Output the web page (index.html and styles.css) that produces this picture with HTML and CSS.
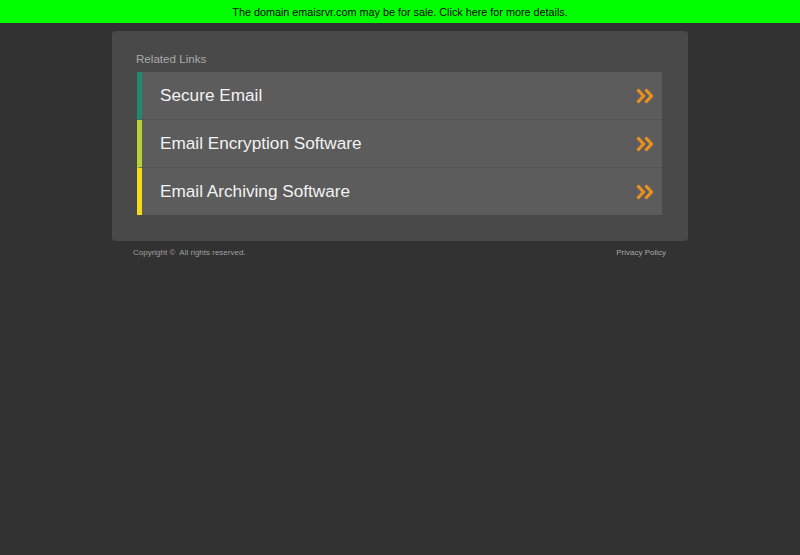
FILE: index.html
```html
<!DOCTYPE html>
<html>
<head>
<meta charset="utf-8">
<link rel="stylesheet" href="styles.css">
</head>
<body>
<div class="topbar"><a href="#">The domain emaisrvr.com may be for sale. Click here for more details.</a></div>
<div class="wrap">
  <div class="panel">
    <h2 class="heading">Related Links</h2>
    <ul class="links">
      <li class="link c1"><span class="label">Secure Email</span><svg class="arrow" width="18" height="16" viewBox="0 0 18 16"><polyline points="1.5,1.5 7.5,8 1.5,14.5"/><polyline points="9.5,1.5 15.5,8 9.5,14.5"/></svg></li>
      <li class="link c2"><span class="label">Email Encryption Software</span><svg class="arrow" width="18" height="16" viewBox="0 0 18 16"><polyline points="1.5,1.5 7.5,8 1.5,14.5"/><polyline points="9.5,1.5 15.5,8 9.5,14.5"/></svg></li>
      <li class="link c3"><span class="label">Email Archiving Software</span><svg class="arrow" width="18" height="16" viewBox="0 0 18 16"><polyline points="1.5,1.5 7.5,8 1.5,14.5"/><polyline points="9.5,1.5 15.5,8 9.5,14.5"/></svg></li>
    </ul>
  </div>
  <div class="footer">
    <span class="copy">Copyright &copy;&nbsp; All rights reserved.</span>
    <a class="privacy" href="#">Privacy Policy</a>
  </div>
</div>
</body>
</html>
```
FILE: styles.css
```css
html, body {
  margin: 0;
  padding: 0;
  background: #323232;
  font-family: "Liberation Sans", Arial, sans-serif;
}
.topbar {
  height: 23px;
  line-height: 24px;
  background: #00ff00;
  text-align: center;
  font-size: 10.8px;
}
.topbar a {
  color: #000;
  text-decoration: none;
}
.wrap {
  width: 576px;
  margin: 8px auto 0;
}
.panel {
  background: #494949;
  border-radius: 4px;
  padding: 20px 26px 26px 25px;
}
.heading {
  margin: 0 0 5px -1px;
  font-weight: normal;
  font-size: 11.6px;
  line-height: 16px;
  color: #a9a9a9;
}
.links {
  list-style: none;
  margin: 0;
  padding: 0;
}
.link {
  display: flex;
  align-items: center;
  justify-content: space-between;
  height: 47px;
  background: #5c5c5c;
  border-left: 5px solid;
  border-bottom: 1px solid #525252;
  padding: 0 8px 0 18px;
}
.link:last-child {
  border-bottom: none;
  height: 47px;
}
.c1 { border-left-color: #1e8b6f; }
.c2 { border-left-color: #b6d334; }
.c3 { border-left-color: #f7d91c; }
.label {
  color: #f2f2f2;
  font-size: 17.2px;
}
.arrow {
  fill: none;
  stroke: #e8921d;
  stroke-width: 3.2;
  stroke-linejoin: miter;
  stroke-linecap: butt;
}
.footer {
  display: flex;
  justify-content: space-between;
  padding: 6px 22px 0 21px;
  line-height: 12px;
  font-size: 8px;
}
.copy { color: #a0a0a0; }
.privacy { color: #a8a8a8; text-decoration: none; }
```
